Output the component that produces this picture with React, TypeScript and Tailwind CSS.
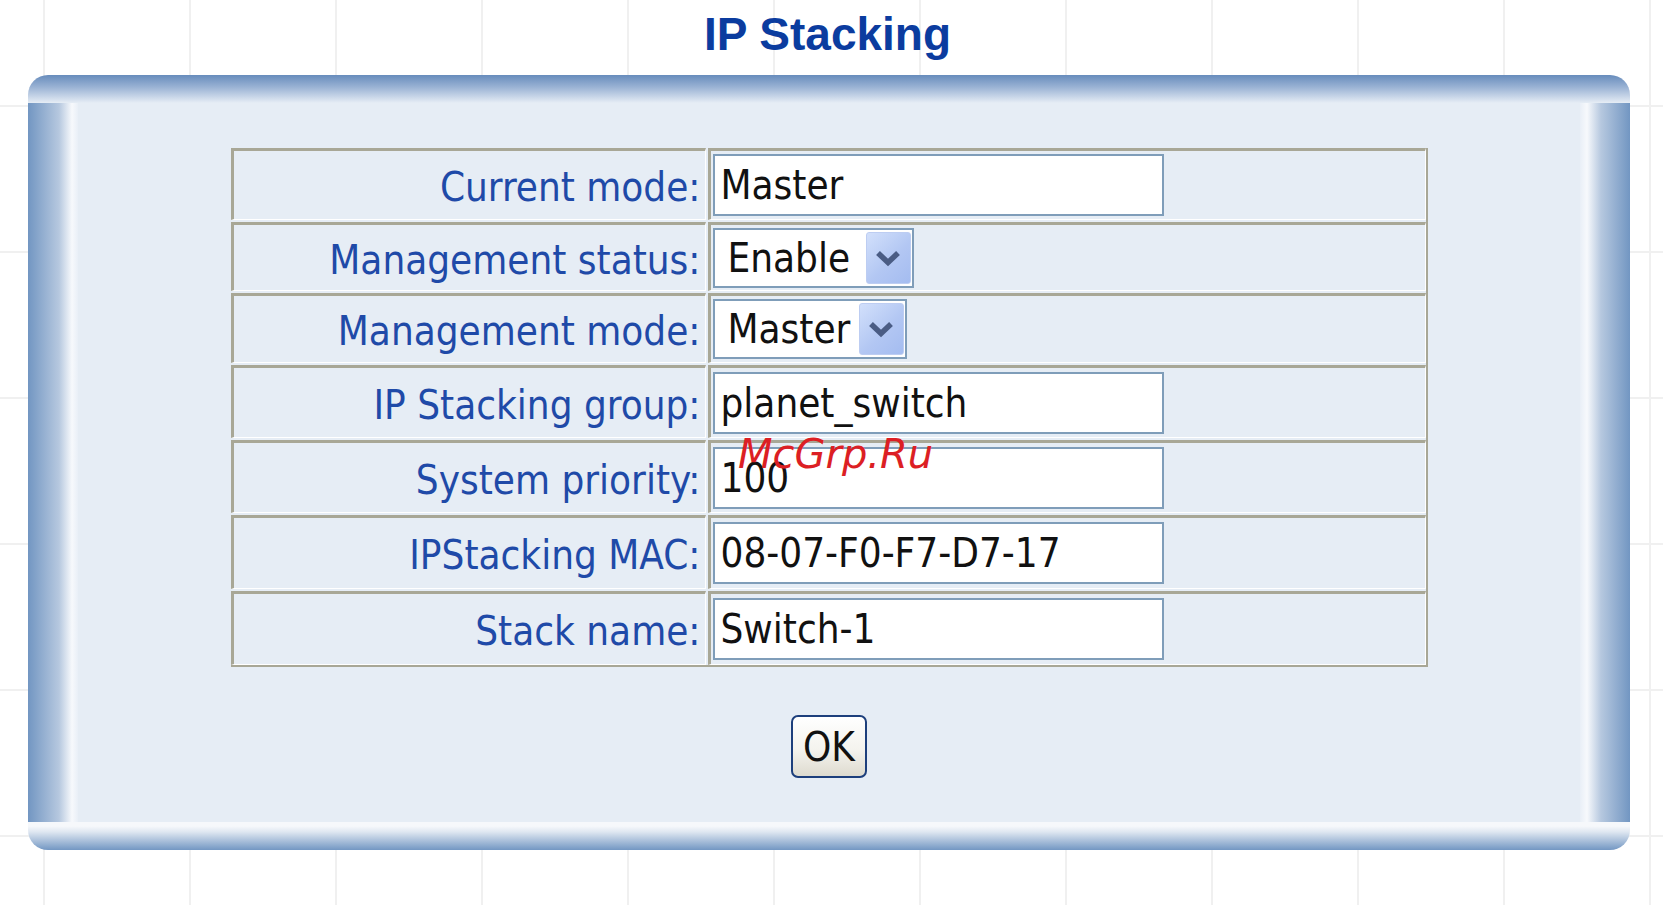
type Row = {
  label: string;
  kind: "input" | "select";
  value: string;
  h: string;
  w?: string;
};

const rows: Row[] = [
  { label: "Current mode:", kind: "input", value: "Master", h: "h-[72px]" },
  { label: "Management status:", kind: "select", value: "Enable", h: "h-[69px]", w: "w-[201px]" },
  { label: "Management mode:", kind: "select", value: "Master", h: "h-[70px]", w: "w-[194px]" },
  { label: "IP Stacking group:", kind: "input", value: "planet_switch", h: "h-[73px]" },
  { label: "System priority:", kind: "input", value: "100", h: "h-[73px]" },
  { label: "IPStacking MAC:", kind: "input", value: "08-07-F0-F7-D7-17", h: "h-[74px]" },
  { label: "Stack name:", kind: "input", value: "Switch-1", h: "h-[74px]" },
];

function Chevron() {
  return (
    <svg width="26" height="18" viewBox="0 0 26 18" fill="none" className="block h-[18px] w-[26px] shrink-0">
      <path d="M3 4 L13 13.5 L23 4" stroke="#4a5c84" strokeWidth="5.5" strokeLinejoin="miter" />
    </svg>
  );
}

function Field({ row }: { row: Row }) {
  if (row.kind === "select") {
    return (
      <div
        className={`${row.w} flex h-[60px] items-center justify-between border-2 border-[#7f9db9] bg-white pl-[13px] pr-[1px]`}
      >
        <span className="leading-[40px]">{row.value}</span>
        <span className="flex h-[52px] w-[45px] shrink-0 items-center justify-center rounded-[3px] border border-[#bdcdf2] bg-[linear-gradient(135deg,#d2e0fb,#b3c7f3_55%,#a4bcf0)]">
          <Chevron />
        </span>
      </div>
    );
  }
  return (
    <div className="flex h-[62px] w-[451px] items-center border-2 border-[#7f9db9] bg-white px-[6px] leading-[40px]">
      {row.value}
    </div>
  );
}

export default function App() {
  return (
    <div className="relative h-[905px] w-[1663px] overflow-hidden bg-white bg-[linear-gradient(to_right,#f0f0f0_2px,transparent_2px),linear-gradient(to_bottom,#f0f0f0_2px,transparent_2px)] bg-[size:146px_146px] bg-[position:43px_105px]">
      <h1 className="h-[75px] pt-[6px] pr-[8px] text-center font-['Liberation_Sans',Arial,sans-serif] text-[46px] leading-[56px] font-bold text-[#0b3c9f]">
        IP Stacking
      </h1>

      <div className="ml-[28px] flex w-[1602px] flex-col">
        <div className="h-[28px] rounded-t-[20px] bg-[linear-gradient(to_bottom,#678cbc,#9cb4d5_45%,#e6edf5)]" />

        <div className="flex h-[719px]">
          <div className="w-[50px] bg-[linear-gradient(to_right,#7296c2,#b6c8df_62%,#f7f9fc_88%,#e9eff7)]" />

          <div className="flex flex-1 flex-col items-center bg-[#e6edf5] pt-[45px] font-['DejaVu_Sans_Condensed','Liberation_Sans',sans-serif] text-[40px]">
            <div className="grid grid-cols-[475px_718px] gap-[2px] border-r-2 border-b-2 border-[#a8a796]">
              {rows.map((row) => (
                <div key={row.label} className="contents">
                  <div
                    className={`${row.h} flex items-center justify-end border-t-[3px] border-l-[3px] border-r border-b border-t-[#a8a796] border-l-[#a8a796] border-r-white border-b-white pt-[4px] pr-[4px] leading-[40px] text-[#1f4aa8]`}
                  >
                    {row.label}
                  </div>
                  <div
                    className={`${row.h} flex items-center border-t-[3px] border-l-[3px] border-r border-b border-t-[#a8a796] border-l-[#a8a796] border-r-white border-b-white pl-[2px] text-[#111]`}
                  >
                    <Field row={row} />
                  </div>
                </div>
              ))}
            </div>

            <button className="mt-[48px] flex h-[63px] w-[76px] items-center justify-center rounded-[7px] border-2 border-[#1d3f7c] bg-[linear-gradient(to_bottom,#ffffff,#f4f3ee_55%,#dedbcf)] leading-[40px] text-[#111]">
              OK
            </button>
          </div>

          <div className="w-[50px] bg-[linear-gradient(to_right,#e9eff7,#f7f9fc_14%,#b6c8df_42%,#7296c2)]" />
        </div>

        <div className="h-[28px] rounded-b-[20px] bg-[linear-gradient(to_bottom,#f6f8fb,#f6f8fb_15%,#dfe7f1_35%,#7397c3)]" />
      </div>

      <div className="absolute left-[738px] top-[434px] font-['DejaVu_Sans',sans-serif] text-[40px] leading-[40px] italic text-[#dc1f24]">
        McGrp.Ru
      </div>
    </div>
  );
}
